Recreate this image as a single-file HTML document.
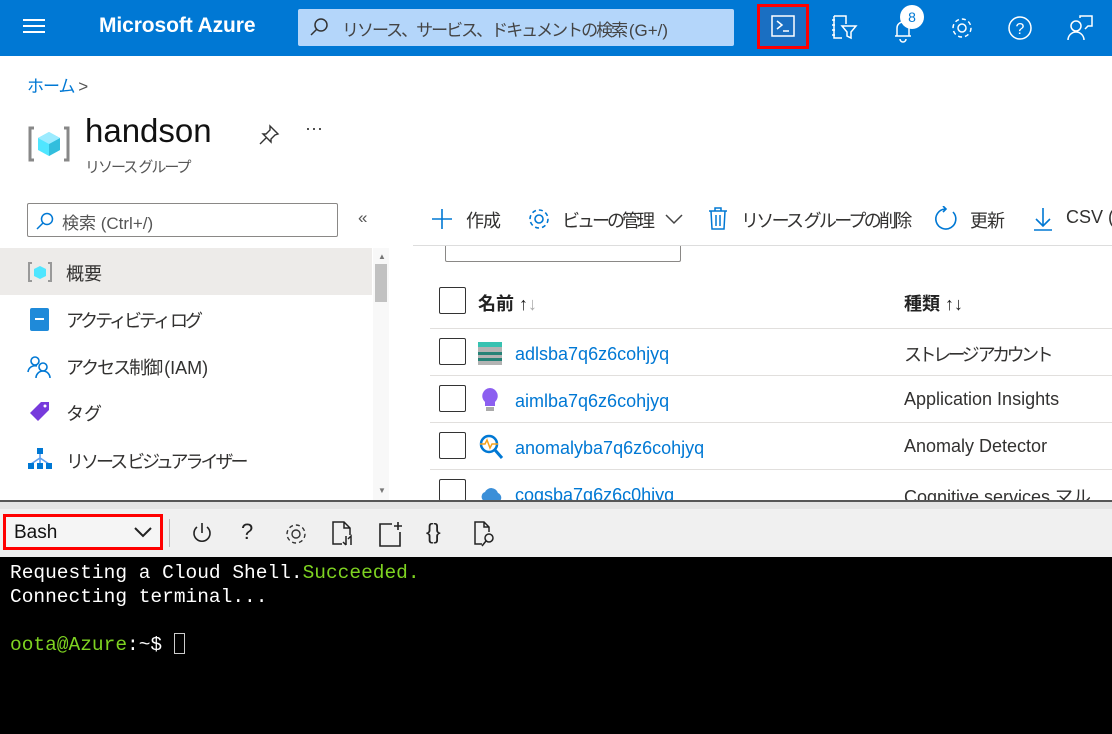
<!DOCTYPE html>
<html><head><meta charset="utf-8"><style>
*{margin:0;padding:0;box-sizing:border-box}
body{width:1112px;height:734px;overflow:hidden;background:#fff;font-family:"Liberation Sans","Noto Sans CJK JP",sans-serif;position:relative;color:#323130}
.a{position:absolute}
.hdr{left:0;top:0;width:1112px;height:56px;background:#0078d4}
.t{white-space:nowrap}
.j{letter-spacing:-3px}
</style></head><body>
<div class="a hdr"></div>
<div class="a" style="left:23px;top:19px;width:22px;height:2px;background:#fff;box-shadow:0 6px 0 #fff,0 12px 0 #fff"></div>
<div class="a t" style="left:99px;top:14px;color:#fff;font-size:21px;font-weight:bold;letter-spacing:-0.1px">Microsoft Azure</div>
<div class="a" style="left:298px;top:9px;width:436px;height:37px;background:#b4d6fa;border-radius:2px"></div>
<svg class="a" style="left:308px;top:16px" width="22" height="22"><circle cx="13" cy="9" r="6" fill="none" stroke="#333" stroke-width="1.5"/><line x1="9" y1="13" x2="3" y2="19" stroke="#333" stroke-width="1.5"/></svg>
<div class="a t" style="left:342px;top:16px;font-size:17px;color:#444;letter-spacing:-2px">リソース、サービス、ドキュメントの検索 <span style="letter-spacing:0">(G+/)</span></div>
<div class="a" style="left:757px;top:4px;width:52px;height:45px;background:#1a6fc2;border:3px solid #f00"></div>
<svg class="a" style="left:771px;top:15px" width="26" height="24"><rect x="1" y="1" width="22" height="20" fill="none" stroke="#fff" stroke-width="1.5"/><path d="M6 6l5 4-5 4M12 16h6" fill="none" stroke="#fff" stroke-width="1.5"/></svg>
<svg class="a" style="left:830px;top:14px" width="28" height="28"><path d="M4 2h12v8M4 2v22h8M2 6h3M2 11h3M2 16h3M2 21h3M12 12h14l-5 6v6l-4-2v-4z" fill="none" stroke="#fff" stroke-width="1.5"/></svg>
<svg class="a" style="left:890px;top:14px" width="30" height="30"><path d="M5 22h16M7 22v-8a6 6 0 0 1 12 0v8M10 25a3 3 0 0 0 6 0" fill="none" stroke="#fff" stroke-width="1.5"/></svg>
<div class="a t" style="left:900px;top:5px;width:24px;height:24px;border-radius:12px;background:#fff;color:#0078d4;font-size:14px;text-align:center;line-height:24px">8</div>
<svg class="a" style="left:949px;top:15px" width="26" height="26"><circle cx="13" cy="13" r="4" fill="none" stroke="#fff" stroke-width="1.5"/><circle cx="13" cy="13" r="9" fill="none" stroke="#fff" stroke-width="1.5" stroke-dasharray="4 3"/></svg>
<svg class="a" style="left:1007px;top:15px" width="26" height="26"><circle cx="13" cy="13" r="11" fill="none" stroke="#fff" stroke-width="1.5"/><text x="13" y="19" text-anchor="middle" fill="#fff" font-size="16" font-family="Liberation Sans">?</text></svg>
<svg class="a" style="left:1066px;top:14px" width="28" height="28"><circle cx="10" cy="12" r="5" fill="none" stroke="#fff" stroke-width="1.5"/><path d="M2 26a8 8 0 0 1 16 0M14 4V2h12v10h-4l-3 3" fill="none" stroke="#fff" stroke-width="1.5"/></svg>

<div class="a t" style="left:27px;top:72px;font-size:17px;color:#0078d4;letter-spacing:-1px">ホーム <span style="color:#555">&gt;</span></div>
<svg class="a" style="left:27px;top:124px" width="44" height="40"><path d="M7 4H3v32h4M37 4h4v32h-4" fill="none" stroke="#888" stroke-width="3"/><path d="M22 8l11 6v12l-11 6-11-6V14z" fill="#50e6ff"/><path d="M22 20l11-6v12l-11 6z" fill="#32bedd"/><path d="M11 14l11 6 11-6-11-6z" fill="#9cebff"/></svg>
<div class="a t" style="left:85px;top:112px;font-size:33px;color:#111">handson</div>
<svg class="a" style="left:258px;top:124px" width="22" height="22"><path d="M12 2l8 8-3 1-4 4 0 3-8-8 3 0 4-4zM8 14l-6 6" fill="none" stroke="#333" stroke-width="1.4"/></svg>
<div class="a t" style="left:305px;top:118px;font-size:18px;color:#333">···</div>
<div class="a t" style="left:85px;top:156px;font-size:15px;color:#555;letter-spacing:-2px">リソース グループ</div>

<div class="a" style="left:27px;top:203px;width:311px;height:34px;border:1px solid #8a8886;border-radius:2px"></div>
<svg class="a" style="left:34px;top:210px" width="22" height="22"><circle cx="13" cy="9" r="5.5" fill="none" stroke="#0078d4" stroke-width="1.5"/><line x1="9" y1="13" x2="3" y2="19" stroke="#0078d4" stroke-width="1.5"/></svg>
<div class="a t" style="left:62px;top:209px;font-size:17px;color:#555">検索 (Ctrl+/)</div>
<div class="a t" style="left:358px;top:208px;font-size:17px;color:#555">«</div>

<div class="a" style="left:0;top:248px;width:372px;height:47px;background:#edebe9"></div>
<div class="a" style="left:373px;top:248px;width:16px;height:252px;background:#f8f8f8"></div>
<div class="a" style="left:375px;top:264px;width:12px;height:38px;background:#c1c1c1"></div>
<div class="a t" style="left:378px;top:252px;font-size:8px;color:#777">▲</div>
<div class="a t" style="left:378px;top:486px;font-size:8px;color:#777">▼</div>
<svg class="a" style="left:27px;top:261px" width="26" height="22"><path d="M5 2H2v18h3M21 2h3v18h-3" fill="none" stroke="#999" stroke-width="2"/><path d="M13 5l6 3v7l-6 3-6-3V8z" fill="#50e6ff"/></svg>
<div class="a t" style="left:66px;top:260px;font-size:18px">概要</div>
<div class="a" style="left:30px;top:308px;width:19px;height:23px;background:#1f8ad9;border-radius:2px"></div>
<div class="a" style="left:35px;top:318px;width:9px;height:2px;background:#fff"></div>
<div class="a t j" style="left:66px;top:307px;font-size:18px">アクティビティ ログ</div>
<svg class="a" style="left:26px;top:354px" width="28" height="26"><circle cx="9" cy="7" r="4" fill="none" stroke="#0078d4" stroke-width="1.6"/><circle cx="17" cy="13" r="4" fill="none" stroke="#0078d4" stroke-width="1.6"/><path d="M2 18a7 7 0 0 1 9-6M10 24a7 7 0 0 1 14 0" fill="none" stroke="#0078d4" stroke-width="1.6"/></svg>
<div class="a t" style="left:66px;top:354px;font-size:18px;letter-spacing:-2px">アクセス制御 <span style="letter-spacing:0">(IAM)</span></div>
<svg class="a" style="left:28px;top:400px" width="24" height="24"><path d="M13 2h8v8L10 21 2 13z" fill="#773adc"/><circle cx="17" cy="6" r="1.5" fill="#fff"/></svg>
<div class="a t" style="left:66px;top:400px;font-size:18px">タグ</div>
<svg class="a" style="left:27px;top:446px" width="26" height="26"><rect x="10" y="2" width="6" height="6" fill="#0078d4"/><path d="M13 8v10M4 18l9-6 9 6" fill="none" stroke="#5ea0ef" stroke-width="1.6"/><rect x="1" y="17" width="6" height="6" fill="#0078d4"/><rect x="10" y="17" width="6" height="6" fill="#0078d4"/><rect x="19" y="17" width="6" height="6" fill="#0078d4"/></svg>
<div class="a t j" style="left:66px;top:448px;font-size:18px">リソース ビジュアライザー</div>

<svg class="a" style="left:430px;top:207px" width="24" height="24"><path d="M12 2v20M2 12h20" stroke="#0078d4" stroke-width="1.6"/></svg>
<div class="a t" style="left:466px;top:207px;font-size:18px;letter-spacing:-1px">作成</div>
<svg class="a" style="left:526px;top:206px" width="26" height="26"><circle cx="13" cy="13" r="4" fill="none" stroke="#0078d4" stroke-width="1.6"/><circle cx="13" cy="13" r="9" fill="none" stroke="#0078d4" stroke-width="1.6" stroke-dasharray="4 3"/></svg>
<div class="a t j" style="left:562px;top:207px;font-size:18px">ビューの管理</div>
<svg class="a" style="left:664px;top:212px" width="20" height="14"><path d="M2 3l8 8 8-8" fill="none" stroke="#444" stroke-width="1.5"/></svg>
<svg class="a" style="left:707px;top:206px" width="22" height="26"><path d="M2 5h18M8 5V2h6v3M4 5l1 18h12l1-18M9 9v11M13 9v11" fill="none" stroke="#0078d4" stroke-width="1.5"/></svg>
<div class="a t" style="left:741px;top:207px;font-size:18px;letter-spacing:-2.7px">リソース グループの削除</div>
<svg class="a" style="left:933px;top:206px" width="26" height="26"><path d="M20 6a10 10 0 1 1-8-3" fill="none" stroke="#0078d4" stroke-width="1.6"/><path d="M10 0l3 3-3 3" fill="none" stroke="#0078d4" stroke-width="1.6"/></svg>
<div class="a t" style="left:970px;top:207px;font-size:18px;letter-spacing:-1px">更新</div>
<svg class="a" style="left:1032px;top:206px" width="22" height="26"><path d="M11 2v18M4 13l7 7 7-7M2 24h18" fill="none" stroke="#0078d4" stroke-width="1.6"/></svg>
<div class="a t" style="left:1066px;top:207px;font-size:18px">CSV (</div>
<div class="a" style="left:413px;top:245px;width:699px;height:1px;background:#ddd"></div>
<div class="a" style="left:445px;top:246px;width:236px;height:16px;border:1px solid #8a8886;border-top:none;border-radius:0 0 2px 2px"></div>

<div class="a" style="left:439px;top:287px;width:27px;height:27px;border:1.5px solid #333;border-radius:2px"></div>
<div class="a t" style="left:478px;top:290px;font-size:18px;font-weight:bold;color:#222">名前 <span style="font-weight:normal;font-size:18px">↑<span style="color:#aaa">↓</span></span></div>
<div class="a t" style="left:904px;top:290px;font-size:18px;font-weight:bold;color:#222">種類 <span style="font-weight:normal;font-size:18px">↑↓</span></div>
<div class="a" style="left:430px;top:328px;width:682px;height:1px;background:#e1dfdd"></div>
<div class="a" style="left:430px;top:375px;width:682px;height:1px;background:#e1dfdd"></div>
<div class="a" style="left:430px;top:422px;width:682px;height:1px;background:#e1dfdd"></div>
<div class="a" style="left:430px;top:469px;width:682px;height:1px;background:#e1dfdd"></div>
<div class="a" style="left:439px;top:338px;width:27px;height:27px;border:1.5px solid #333;border-radius:2px"></div>
<div class="a" style="left:439px;top:385px;width:27px;height:27px;border:1.5px solid #333;border-radius:2px"></div>
<div class="a" style="left:439px;top:432px;width:27px;height:27px;border:1.5px solid #333;border-radius:2px"></div>
<div class="a" style="left:439px;top:479px;width:27px;height:22px;border:1.5px solid #333;border-bottom:none;border-radius:2px"></div>
<svg class="a" style="left:478px;top:342px" width="24" height="24"><rect x="0" y="0" width="24" height="5" fill="#37c2b1"/><rect x="0" y="5" width="24" height="18" fill="#b3b3b3"/><rect x="0" y="10" width="24" height="3" fill="#258277"/><rect x="0" y="16" width="24" height="3" fill="#258277"/></svg>
<svg class="a" style="left:481px;top:387px" width="18" height="26"><path d="M9 1a8 8 0 0 1 5 14v4H4v-4A8 8 0 0 1 9 1z" fill="#8c5ff0"/><rect x="5" y="20" width="8" height="4" fill="#aaa"/></svg>
<svg class="a" style="left:478px;top:433px" width="26" height="28"><circle cx="11" cy="11" r="8" fill="none" stroke="#0078d4" stroke-width="2.5"/><path d="M2 11h5l2-4 3 8 2-4h6" fill="none" stroke="#f7a21b" stroke-width="1.5"/><path d="M17 17l7 8" stroke="#0078d4" stroke-width="3"/></svg>
<svg class="a" style="left:478px;top:483px" width="26" height="18"><path d="M6 18a5 5 0 0 1 1-9 7 7 0 0 1 13 1 5 5 0 0 1 2 8z" fill="#3b8fd8"/></svg>
<div class="a t" style="left:515px;top:344px;font-size:18px;color:#0078d4">adlsba7q6z6cohjyq</div>
<div class="a t" style="left:515px;top:391px;font-size:18px;color:#0078d4">aimlba7q6z6cohjyq</div>
<div class="a t" style="left:515px;top:438px;font-size:18px;color:#0078d4">anomalyba7q6z6cohjyq</div>
<div class="a t" style="left:515px;top:485px;font-size:18px;color:#0078d4;height:16px;overflow:hidden">cogsba7q6z6c0hjyq</div>
<div class="a t" style="left:904px;top:341px;font-size:18px;letter-spacing:-3.5px">ストレージ アカウント</div>
<div class="a t" style="left:904px;top:389px;font-size:18px">Application Insights</div>
<div class="a t" style="left:904px;top:436px;font-size:18px">Anomaly Detector</div>
<div class="a t" style="left:904px;top:483px;font-size:18px;height:18px;overflow:hidden">Cognitive services マル...</div>

<div class="a" style="left:0;top:500px;width:1112px;height:2px;background:#555"></div>
<div class="a" style="left:0;top:502px;width:1112px;height:55px;background:#f0f0f0"></div>
<div class="a" style="left:0;top:502px;width:1112px;height:7px;background:#e3e3e3"></div>
<div class="a" style="left:3px;top:514px;width:160px;height:36px;border:3px solid #f00;background:#f5f5f5"></div>
<div class="a t" style="left:14px;top:522px;font-size:19px;color:#111">Bash</div>
<svg class="a" style="left:133px;top:525px" width="20" height="14"><path d="M2 3l8 8 8-8" fill="none" stroke="#222" stroke-width="2"/></svg>
<div class="a" style="left:169px;top:519px;width:1px;height:28px;background:#bbb"></div>
<svg class="a" style="left:190px;top:521px" width="24" height="26"><path d="M7 6a8 8 0 1 0 10 0M12 2v10" fill="none" stroke="#222" stroke-width="1.6"/></svg>
<div class="a t" style="left:241px;top:519px;font-size:22px;color:#222">?</div>
<svg class="a" style="left:283px;top:521px" width="26" height="26"><circle cx="13" cy="13" r="4" fill="none" stroke="#333" stroke-width="1.4"/><circle cx="13" cy="13" r="9" fill="none" stroke="#333" stroke-width="1.4" stroke-dasharray="4 3"/></svg>
<svg class="a" style="left:331px;top:520px" width="24" height="28"><path d="M11 24H2V2h11l6 6v7M13 2v6h6M15 16v9M12 22l3 3M20 25v-9l-3 3" fill="none" stroke="#222" stroke-width="1.5"/></svg>
<svg class="a" style="left:378px;top:520px" width="26" height="28"><path d="M14 4H2v22h20V12M20 2v8M16 6h8" fill="none" stroke="#222" stroke-width="1.6"/></svg>
<div class="a t" style="left:426px;top:519px;font-size:22px;color:#222">{}</div>
<svg class="a" style="left:472px;top:520px" width="26" height="28"><path d="M10 24H3V2h9l5 5v5M12 2v5h5" fill="none" stroke="#222" stroke-width="1.5"/><circle cx="17" cy="18" r="4" fill="none" stroke="#222" stroke-width="1.5"/><path d="M14 21l-4 5" stroke="#222" stroke-width="1.5"/></svg>

<div class="a" style="left:0;top:557px;width:1112px;height:177px;background:#000"></div>
<div class="a t" style="left:10px;top:561px;font-family:'Liberation Mono',monospace;font-size:19.5px;line-height:24px;color:#fff;letter-spacing:0px">Requesting a Cloud Shell.<span style="color:#7ed321">Succeeded.</span><br>Connecting terminal...<br><br><span style="color:#7ed321">oota@Azure</span>:~$ <span style="display:inline-block;width:11px;height:21px;border:1px solid #ccc;vertical-align:-4px"></span></div>
</body></html>
